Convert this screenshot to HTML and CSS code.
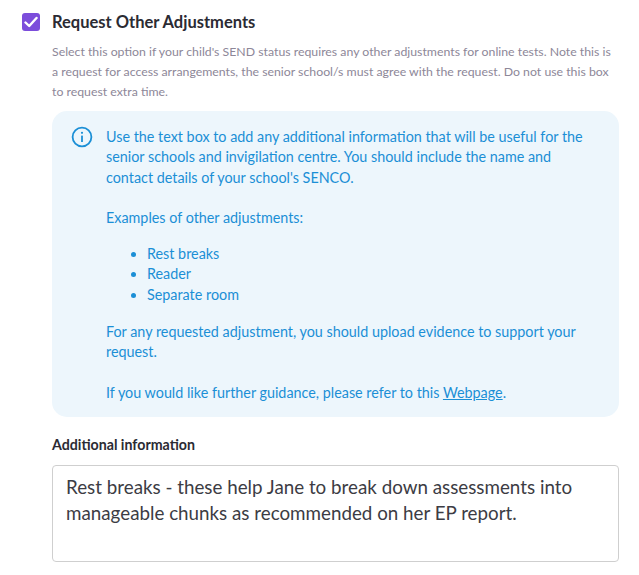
FILE: index.html
```html
<!DOCTYPE html>
<html lang="en">
<head>
  <meta charset="UTF-8">
  <meta name="viewport" content="width=device-width, initial-scale=1.0">
  <title>Request Other Adjustments</title>
  <link rel="stylesheet" href="styles.css">
</head>
<body>
<div class="option">
  <div class="option-head">
    <span class="checkbox">
      <svg width="14" height="12" viewBox="0 0 14 12" aria-hidden="true"><path d="M1.5 6.5 L5.2 10 L12.5 2" fill="none" stroke="#fff" stroke-width="2.4" stroke-linecap="round" stroke-linejoin="round"/></svg>
    </span>
    <h2>Request Other Adjustments</h2>
  </div>
  <div class="option-body">
    <p class="hint">Select this option if your child's SEND status requires any other adjustments for online tests. Note this is<br>a request for access arrangements, the senior school/s must agree with the request. Do not use this box<br>to request extra time.</p>

    <!-- Info box -->
    <div class="info-box">
      <svg class="info-icon" width="22" height="22" viewBox="0 0 22 22" aria-hidden="true">
        <circle cx="11" cy="11" r="9.4" fill="none" stroke="#1b8fd6" stroke-width="1.8"/>
        <rect x="10.1" y="9.6" width="1.8" height="6.4" fill="#1b8fd6"/>
        <circle cx="11" cy="6.8" r="1.1" fill="#1b8fd6"/>
      </svg>
      <div class="info-text">
        <p>Use the text box to add any additional information that will be useful for the<br>senior schools and invigilation centre. You should include the name and<br>contact details of your school's SENCO.</p>
        <p>Examples of other adjustments:</p>
        <ul>
          <li>Rest breaks</li>
          <li>Reader</li>
          <li>Separate room</li>
        </ul>
        <p>For any requested adjustment, you should upload evidence to support your<br>request.</p>
        <p>If you would like further guidance, please refer to this <a href="#">Webpage</a>.</p>
      </div>
    </div>

    <label class="field-label" for="additionalInfo">Additional information</label>
    <div class="textbox" id="additionalInfo">Rest breaks - these help Jane to break down assessments into<br>manageable chunks as recommended on her EP report.</div>
  </div>
</div>
</body>
</html>
```

FILE: styles.css
```css
body {
  font-family: Lato, "Open Sans", sans-serif;
  margin: 0;
  background-color: #fff;
  overflow: hidden;
}
.option {
  padding: 12px 20px 0 22px;
}
.option-head {
  display: flex;
  align-items: center;
  gap: 12px;
  height: 19px;
}
.option-head h2 {
  margin: 0;
  font-size: 16.5px;
  font-weight: 700;
  color: #2b2b33;
}
.checkbox {
  width: 18px;
  height: 18px;
  border-radius: 3px;
  background-color: #7c4ddb;
  display: flex;
  align-items: center;
  justify-content: center;
}
.option-body {
  margin-left: 30px;
}
.hint {
  margin: 11px 0 0;
  font-size: 12.3px;
  line-height: 20px;
  color: #8d8798;
  white-space: nowrap;
}
.info-box {
  display: flex;
  gap: 13px;
  margin-top: 9px;
  padding: 16px 19px 14px;
  height: 306px;
  box-sizing: border-box;
  background-color: #edf6fc;
  border-radius: 15px;
}
.info-icon {
  flex-shrink: 0;
  margin-top: -1px;
}
.info-text {
  font-size: 14.35px;
  line-height: 20.3px;
  color: #1b8fd6;
  white-space: nowrap;
}
.info-text p {
  margin: 0 0 20.5px;
}
.info-text ul {
  margin: -5px 0 17px;
  padding-left: 41px;
}
.info-text a {
  color: #1b8fd6;
}
.field-label {
  display: block;
  margin-top: 19px;
  font-size: 14.2px;
  line-height: 17px;
  font-weight: 700;
  color: #2b2b33;
}
.textbox {
  margin-top: 12px;
  height: 97px;
  box-sizing: border-box;
  padding: 8px 13px;
  border: 1px solid #cfcfcf;
  border-radius: 4px;
  font-size: 18.8px;
  line-height: 25.5px;
  color: #3c3c44;
  white-space: nowrap;
}
```
